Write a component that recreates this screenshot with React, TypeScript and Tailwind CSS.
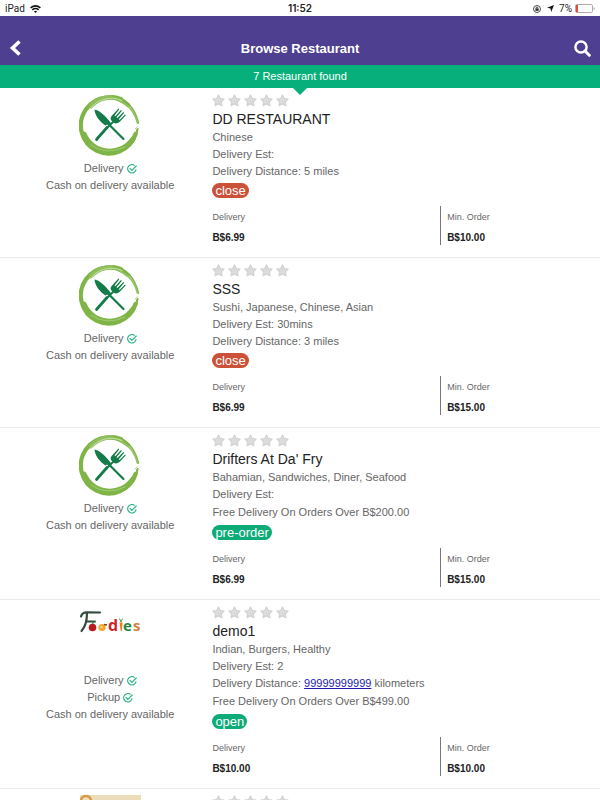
import React from "react";

type Status = "close" | "pre-order" | "open";

interface Restaurant {
  name: string;
  cuisine: string;
  estimate: string;
  distance?: React.ReactNode;
  offer?: string;
  status: Status;
  fee: string;
  minimum: string;
  services: string[];
  logo: "cutlery" | "foodies" | "banner";
}

const restaurants: Restaurant[] = [
  { name: "DD RESTAURANT", cuisine: "Chinese", estimate: "", distance: "5 miles", status: "close", fee: "B$6.99", minimum: "B$10.00", services: ["Delivery"], logo: "cutlery" },
  { name: "SSS", cuisine: "Sushi, Japanese, Chinese, Asian", estimate: "30mins", distance: "3 miles", status: "close", fee: "B$6.99", minimum: "B$15.00", services: ["Delivery"], logo: "cutlery" },
  { name: "Drifters At Da' Fry", cuisine: "Bahamian, Sandwiches, Diner, Seafood", estimate: "", offer: "Free Delivery On Orders Over B$200.00", status: "pre-order", fee: "B$6.99", minimum: "B$15.00", services: ["Delivery"], logo: "cutlery" },
  {
    name: "demo1",
    cuisine: "Indian, Burgers, Healthy",
    estimate: "2",
    distance: (
      <>
        <a href="tel:99999999999" className="text-[#2118b0] underline">99999999999</a> kilometers
      </>
    ),
    offer: "Free Delivery On Orders Over B$499.00",
    status: "open",
    fee: "B$10.00",
    minimum: "B$10.00",
    services: ["Delivery", "Pickup"],
    logo: "foodies",
  },
];

const badgeColor: Record<Status, string> = {
  close: "bg-[#cb5238]",
  "pre-order": "bg-[#0dab78]",
  open: "bg-[#0dab78]",
};

function CutleryLogo() {
  return (
    <svg viewBox="0 0 62 62" className="size-[62px]" aria-hidden="true">
      <g fill="none" strokeLinecap="round">
        <path d="M56.500 40A28 28 0 1 1 49 11" stroke="#7fb446" strokeWidth="4.200" />
        <path d="M12 12A28 28 0 0 1 42 5" stroke="#8fbf5c" strokeWidth="4.500" />
        <path d="M34 2Q54 6 59.500 29" stroke="#7fb446" strokeWidth="1.500" />
        <path d="M40 7Q54 12 58.500 29" stroke="#94c164" strokeWidth="1.800" />
        <path d="M11 15A26 26 0 0 1 43 6.500" stroke="#cfe4b8" strokeWidth=".8" />
        <path d="M5 40A28 28 0 0 0 54 45" stroke="#7fb446" strokeWidth="5" />
        <path d="M55 45Q58 41 58.500 35" stroke="#7fb446" strokeWidth="2.200" />
        <path d="M12 51Q27 62 46 53" stroke="#a9cf80" strokeWidth=".8" />
        <path d="M56 35l2.500-2.500" stroke="#b9d69a" strokeWidth="1" />
        <path d="M28 33.500L17.500 45.500" stroke="#137c48" strokeWidth="2.800" />
        <path d="M35 27L28 34" stroke="#137c48" strokeWidth="1.800" />
        <path d="M31 31.500L44.500 45" stroke="#137c48" strokeWidth="2.200" />
      </g>
      <path d="M15.500 15.500C20 16 27 22 32.500 30L30.500 32.500L28 30.500L26.500 31.500C21 28 16 22 15.500 15.500Z" fill="#137c48" />
      <path d="M32 26C31 24 32 22.500 33.500 21L39.500 14.500L40.300 15.300L35.500 21.500L36.300 22.200L42 16L42.900 16.800L37.500 23.200L38.400 24L44.400 18L45.200 18.800L39.800 25.200L40.500 26L46 20.500L46.800 21.300L41 27.500C39 29.500 37 30 35 29Z" fill="#137c48" />
    </svg>
  );
}

function FoodiesLogo() {
  return (
    <svg viewBox="0 0 62 62" className="size-[62px]" role="img" aria-label="Foodies">
      <path d="M2 10.500Q3 6.500 7 6.300L21 6.500M8 7Q8 19 2.500 25M7 15.500H16" fill="none" stroke="#344a3d" strokeWidth="2.200" strokeLinecap="round" />
      <circle cx="13.500" cy="21.500" r="3.800" fill="#b91c20" />
      <path d="M13.500 18q.5-2.500 3.500-2.500" fill="none" stroke="#43853a" strokeWidth="1.200" />
      <circle cx="23" cy="21.500" r="3.600" fill="#f2a42e" />
      <circle cx="22.500" cy="21" r="1.500" fill="#f8cf6c" />
      <path d="M25 18.500l3 .5" stroke="#8a3d26" strokeWidth="1.500" />
      <text x="29" y="25" fontSize="16" fontWeight="bold" fontFamily="Open Sans, sans-serif" fill="#d41f28">d</text>
      <path d="M40.500 16.500h3.200l-1 8.500h-1z" fill="#ee7b24" />
      <path d="M42 16l-1.500-3.500M42 16l1.500-3.500" stroke="#4d9a43" strokeWidth="1" />
      <text x="44" y="25" fontSize="15" fontWeight="bold" fontFamily="Open Sans, sans-serif" fill="#24853d">e</text>
      <text x="54" y="25" fontSize="15" fontWeight="bold" fontFamily="Open Sans, sans-serif" fill="#cf823e">s</text>
    </svg>
  );
}

function BannerLogo() {
  return (
    <svg viewBox="0 0 62 62" className="size-[62px]" aria-hidden="true">
      <rect x="1" width="61" height="50" fill="#ecdcb9" />
      <circle cx="7" cy="6" r="5" fill="#f2dfb9" stroke="#d69b45" strokeWidth="2.500" />
    </svg>
  );
}

function Logo({ kind }: { kind: Restaurant["logo"] }) {
  if (kind === "cutlery") return <CutleryLogo />;
  if (kind === "foodies") return <FoodiesLogo />;
  return <BannerLogo />;
}

function Stars() {
  return (
    <div className="flex h-[14px] gap-[3px]" role="img" aria-label="No rating yet">
      {[0, 1, 2, 3, 4].map((n) => (
        <svg key={n} viewBox="0 0 13 13" className="size-[13px]">
          <path d="M6.500 1L8.200 4.500L12.100 5L9.300 7.800L10 11.800L6.500 9.900L3 11.800L3.700 7.800L.9 5L4.800 4.500Z" fill="#dcdcdc" stroke="#d2d2d2" strokeWidth="1.200" strokeLinejoin="round" />
        </svg>
      ))}
    </div>
  );
}

function CheckMark() {
  return (
    <svg viewBox="0 0 10 10" className="size-[10px]" fill="none" stroke="#27b184" strokeWidth="1.100" strokeLinecap="round" strokeLinejoin="round" aria-hidden="true">
      <path d="M7.300 1.300A4.200 4.200 0 1 0 9 5.600" />
      <path d="M3 4.400L4.800 6.300L9.300 2" />
    </svg>
  );
}

function Card({ item }: { item: Restaurant }) {
  return (
    <li className="grid grid-cols-[35%_65%] border-b border-[#ebebeb] px-2 pt-[6px] pb-3">
      <div className="flex flex-col items-center">
        <Logo kind={item.logo} />
        <div className="pt-[4px] text-center">
          {item.services.map((service) => (
            <p key={service} className="flex items-center justify-center gap-[3px]">
              {service} <CheckMark />
            </p>
          ))}
          <p>Cash on delivery available</p>
        </div>
      </div>
      <div>
        <Stars />
        <h2 className="pt-px text-[14px] leading-[20px] text-[#222]">{item.name}</h2>
        <p>{item.cuisine}</p>
        <p>Delivery Est: {item.estimate}</p>
        {item.distance && <p>Delivery Distance: {item.distance}</p>}
        {item.offer && <p className="py-px">{item.offer}</p>}
        <div className="flex pt-[3px]">
          <span className={`${badgeColor[item.status]} rounded-full px-[3px] text-[13px] leading-[15px] text-white`}>{item.status}</span>
        </div>
        <dl className="mt-2 grid h-[39px] grid-cols-[60%_40%]">
          <div className="flex flex-col justify-between pt-[5px]">
            <dt className="text-[9px] leading-[12px]">Delivery</dt>
            <dd className="text-[10px] leading-[14px] font-bold text-[#222]">{item.fee}</dd>
          </div>
          <div className="flex flex-col justify-between border-l border-[#777] pt-[5px] pl-[6px]">
            <dt className="text-[9px] leading-[12px]">Min. Order</dt>
            <dd className="text-[10px] leading-[14px] font-bold text-[#222]">{item.minimum}</dd>
          </div>
        </dl>
      </div>
    </li>
  );
}

function StatusBar() {
  return (
    <div className="grid h-4 grid-cols-3 items-center px-[5px] font-['Roboto',sans-serif] text-[10px] text-[#222]">
      <div className="flex items-center gap-[5px]">
        <span>iPad</span>
        <svg viewBox="0 0 11 8" className="h-[8px] w-[11px]" fill="none" stroke="#111" strokeWidth="1.500" aria-hidden="true">
          <path d="M.6 2.900Q5.500-1.200 10.400 2.900M2.300 4.800Q5.500 2.200 8.700 4.800" />
          <path d="M3.900 6.300Q5.500 5 7.100 6.300L5.500 8Z" fill="#111" stroke="none" />
        </svg>
      </div>
      <span className="text-center font-['Inter',sans-serif] font-semibold">11:52</span>
      <div className="flex items-center justify-end">
        <svg viewBox="0 0 8 8" className="mr-[6px] size-[8px]" fill="none" stroke="#222" strokeWidth=".8" aria-hidden="true">
          <circle cx="4" cy="4" r="3.500" />
          <rect x="2.400" y="3.600" width="3.200" height="2.200" fill="#222" stroke="none" />
          <path d="M3.100 3.800V3a.9.900 0 0 1 1.800 0v.8" />
        </svg>
        <svg viewBox="0 0 8 8" className="mr-[5px] size-[7px]" aria-hidden="true">
          <path d="M8 0L4.800 8L4 4L0 3.200Z" fill="#111" />
        </svg>
        <span>7%</span>
        <svg viewBox="0 0 20 9" className="ml-[3px] h-[9px] w-[20px]" aria-hidden="true">
          <rect x=".5" y=".5" width="17" height="8" rx="1.500" fill="#fff" stroke="#b5aaaa" />
          <rect x="1" y="1" width="2" height="7" fill="#e8483f" />
          <path d="M18.500 3v3q1.200-.5 1.200-1.500T18.500 3Z" fill="#aaa" />
        </svg>
      </div>
    </div>
  );
}

export default function App() {
  return (
    <div className="h-screen overflow-hidden bg-white font-['Liberation_Sans',Arial,sans-serif] text-[11px] leading-[17px] text-[#666]">
      <StatusBar />
      <header className="flex h-[49px] items-center justify-between bg-[#4e3f91] px-[9px] pt-[15px] text-white">
        <button type="button" aria-label="Back" className="flex w-5">
          <svg viewBox="0 0 12 16" className="h-[16px] w-[12px]" fill="none" stroke="currentColor" strokeWidth="3.600">
            <path d="M10.500 1.500L3.500 8L10.500 14.500" />
          </svg>
        </button>
        <h1 className="text-[13px] font-bold">Browse Restaurant</h1>
        <button type="button" aria-label="Search" className="flex w-5 justify-end">
          <svg viewBox="0 0 17 17" className="mt-px size-[17px]" fill="none" stroke="currentColor">
            <circle cx="7" cy="7" r="5.600" strokeWidth="2.500" />
            <path d="M11 11L15.300 15.300" strokeWidth="3" strokeLinecap="round" />
          </svg>
        </button>
      </header>
      <div className="relative flex h-[23px] items-center justify-center bg-[#07b07b] text-white">
        7 Restaurant found
        <svg viewBox="0 0 14 7" className="absolute top-full left-1/2 h-[7px] w-[14px] -translate-x-1/2" aria-hidden="true">
          <path d="M0 0H14L7 7Z" fill="#07b07b" />
        </svg>
      </div>
      <ul>
        {restaurants.map((item) => (
          <Card key={item.name} item={item} />
        ))}
        <li className="grid grid-cols-[35%_65%] px-2 pt-[6px]">
          <div className="flex justify-center">
            <Logo kind="banner" />
          </div>
          <Stars />
        </li>
      </ul>
    </div>
  );
}
